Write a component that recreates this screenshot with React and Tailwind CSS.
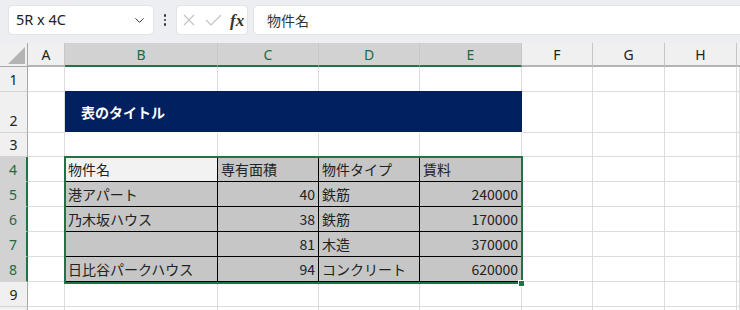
import { ChevronDown } from 'lucide-react';

const cols = ['A', 'B', 'C', 'D', 'E', 'F', 'G', 'H'];
const selCols = ['B', 'C', 'D', 'E'];

const rows = [
  ['物件名', '専有面積', '物件タイプ', '賃料'],
  ['港アパート', '40', '鉄筋', '240000'],
  ['乃木坂ハウス', '38', '鉄筋', '170000'],
  ['', '81', '木造', '370000'],
  ['日比谷パークハウス', '94', 'コンクリート', '620000'],
];

const font = { fontFamily: '"Noto Sans CJK JP", "Noto Sans", sans-serif' };

function RowHead({ n, h, sel }) {
  return (
    <div
      className={`${h} flex items-end justify-center pb-[1px] text-[14px] leading-[20px] border-b border-b-[#d4d4d4] ${sel ? 'bg-[#d2d2d2] text-[#1d6b3e] border-r-2 border-r-[#217346]' : 'bg-[#f0f0f0] text-[#222] border-r border-r-[#a8a8a8]'}`}
      style={{ fontFamily: '"Noto Sans", sans-serif' }}
    >
      {n}
    </div>
  );
}

function Blank({ h }) {
  return <div className={`${h} bg-white border-r border-b border-[#dcdcdc]`} />;
}

export default function App() {
  return (
    <div className="w-[740px] h-[310px] overflow-hidden bg-white" style={font}>
      {/* formula bar */}
      <div className="h-[43px] bg-[#eceef1] flex items-start pt-[5px] pl-[8px]">
        <div className="w-[146px] h-[30px] bg-white rounded-[5px] border border-[#e1e3e6] flex items-center justify-between pl-[7px] pr-[6px]">
          <span className="text-[14.5px] text-[#222]" style={{ fontFamily: '"Noto Sans", sans-serif' }}>5R x 4C</span>
          <ChevronDown size={15} strokeWidth={1.6} className="text-[#333]" />
        </div>
        <div className="w-[22px] h-[30px] flex flex-col items-center justify-center gap-[2px]">
          <span className="w-[2.5px] h-[2.5px] rounded-full bg-[#333]" />
          <span className="w-[2.5px] h-[2.5px] rounded-full bg-[#333]" />
          <span className="w-[2.5px] h-[2.5px] rounded-full bg-[#333]" />
        </div>
        <div className="w-[72px] h-[30px] bg-white rounded-[5px] border border-[#e1e3e6] flex items-center pl-[5px]">
          <svg width="12" height="12" viewBox="0 0 12 12" className="ml-[1px]">
            <path d="M1 1L11 11M11 1L1 11" stroke="#c4c4c4" strokeWidth="1.2" fill="none" />
          </svg>
          <svg width="17" height="12" viewBox="0 0 17 12" className="ml-[10px]">
            <path d="M1 6L6 11L16 1" stroke="#c4c4c4" strokeWidth="1.2" fill="none" />
          </svg>
          <span
            className="ml-[8px] text-[17px] italic font-bold text-[#333] leading-none"
            style={{ fontFamily: '"Liberation Serif", serif' }}
          >
            fx
          </span>
        </div>
        <div className="ml-[5px] flex-1 h-[30px] bg-white rounded-l-[5px] border border-r-0 border-[#e1e3e6] flex items-center pl-[13px]">
          <span className="text-[14px] text-[#333]">物件名</span>
        </div>
      </div>

      {/* sheet */}
      <div className="relative grid grid-cols-[28px_37px_153px_101px_101px_102px_71px_72px_72px_1fr] text-[14px] text-[#222]">
        {/* column headers */}
        <div className="h-[24px] bg-[#f0f0f0] border-r border-b border-[#a8a8a8] flex items-end justify-end pr-[2px] pb-[2px]">
          <svg width="17" height="17" viewBox="0 0 17 17">
            <path d="M17 0L17 17L0 17Z" fill="#b4b4b4" />
          </svg>
        </div>
        {cols.map((c) => {
          const sel = selCols.includes(c);
          return (
            <div
              key={c}
              className={`h-[24px] flex items-center justify-center border-r border-r-[#c6c6c6] ${sel ? 'bg-[#d2d2d2] text-[#1d6b3e] border-b-2 border-b-[#217346]' : 'bg-[#f0f0f0] text-[#222] border-b-2 border-b-[#b4b4b4]'}`}
              style={{ fontFamily: '"Noto Sans", sans-serif' }}
            >
              {c}
            </div>
          );
        })}
        <div className="h-[24px] bg-[#f0f0f0] border-b-2 border-b-[#b4b4b4]" />

        {/* row 1 */}
        <RowHead n="1" h="h-[25px]" />
        {cols.map((c) => <Blank key={c} h="h-[25px]" />)}
        <Blank h="h-[25px]" />

        {/* row 2 */}
        <RowHead n="2" h="h-[41px]" />
        <Blank h="h-[41px]" />
        <div className="col-span-4 h-[41px] bg-[#002060] flex items-center pl-[16px] -mt-[1px] pt-[1px]">
          <span className="text-white font-bold text-[14px]">表のタイトル</span>
        </div>
        <Blank h="h-[41px]" />
        <Blank h="h-[41px]" />
        <Blank h="h-[41px]" />
        <Blank h="h-[41px]" />

        {/* row 3 */}
        <RowHead n="3" h="h-[24px]" />
        {cols.map((c) => <Blank key={c} h="h-[24px]" />)}
        <Blank h="h-[24px]" />

        {/* table rows */}
        {rows.map((r, i) => (
          <div key={i} className="contents">
            <RowHead n={String(i + 4)} h="h-[25px]" sel />
            <Blank h="h-[25px]" />
            {r.map((v, j) => {
              const num = i > 0 && (j === 1 || j === 3);
              const active = i === 0 && j === 0;
              return (
                <div
                  key={j}
                  className={`h-[25px] flex items-center border-r border-b border-black px-[3px] leading-[20px] ${num ? 'justify-end' : 'justify-start'} ${active ? 'bg-[#f2f2f2]' : 'bg-[#c6c6c6]'}`}
                >
                  {v}
                </div>
              );
            })}
            <Blank h="h-[25px]" />
            <Blank h="h-[25px]" />
            <Blank h="h-[25px]" />
            <Blank h="h-[25px]" />
          </div>
        ))}

        {/* row 9 */}
        <RowHead n="9" h="h-[25px]" />
        {cols.map((c) => <Blank key={c} h="h-[25px]" />)}
        <Blank h="h-[25px]" />

        {/* row 10, only its top edge is in view */}
        <RowHead n="" h="h-[25px]" />
        {cols.map((c) => <Blank key={c} h="h-[25px]" />)}
        <Blank h="h-[25px]" />

        {/* selection */}
        <div className="absolute left-[64px] top-[113px] w-[459px] h-[128px] border-2 border-[#217346] pointer-events-none" />
        <div className="absolute left-[518px] top-[237px] w-[7px] h-[7px] bg-[#217346] border border-white pointer-events-none" />
      </div>
    </div>
  );
}
